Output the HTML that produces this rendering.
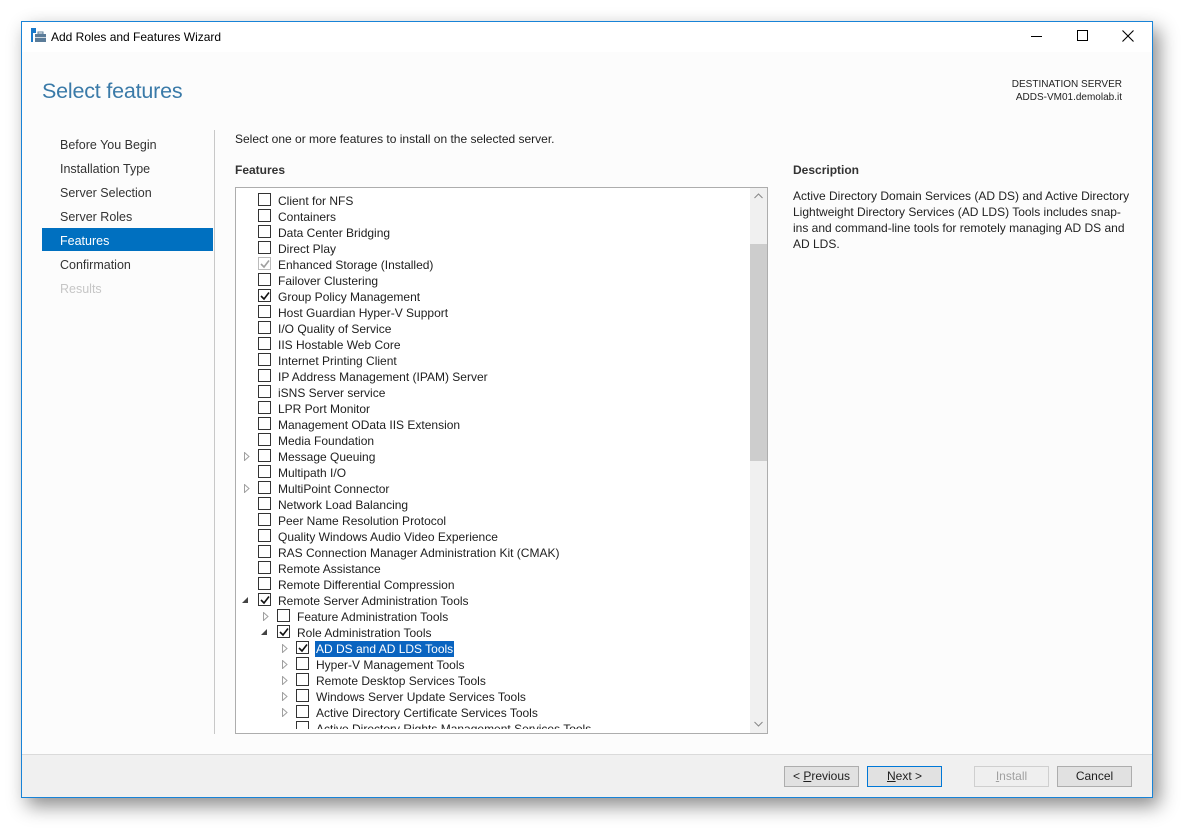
<!DOCTYPE html>
<html><head><meta charset="utf-8"><style>
*{margin:0;padding:0;box-sizing:border-box}
body{width:1195px;height:840px;background:#fff;position:relative;overflow:hidden;font-family:"Liberation Sans",sans-serif;font-size:12px;color:#1e1e1e}
.a{position:absolute;white-space:nowrap}
#win{position:absolute;left:21px;top:21px;width:1132px;height:777px;border:1px solid #1883d7;background:#fcfcfc;box-shadow:6px 8px 18px rgba(0,0,0,.45)}
.nav{position:absolute;left:60px;font-size:12.5px;color:#333}
.row{position:absolute;height:16px;line-height:16px;font-size:12px;color:#1e1e1e}
.cb{position:absolute;width:13px;height:13px;border:1px solid #333;background:#fff;top:1px}
.cb.g{border-color:#bbb}
.btn{position:absolute;top:766px;height:21px;border:1px solid #adadad;background:#e1e1e1;text-align:center;line-height:19px;font-size:12px}
</style></head><body>
<div id="win"></div>
<div class="a" style="left:22px;top:22px;width:1130px;height:30px;background:#fff"></div>
<svg class="a" style="left:31px;top:28px" width="15" height="14"><rect x="0" y="0" width="5" height="5" fill="#1979ca"/><rect x="0" y="5" width="2" height="9" fill="#1979ca"/><rect x="4" y="6" width="11" height="8" fill="#5b7c99"/><rect x="7" y="4" width="5" height="2" fill="none" stroke="#5b7c99"/><rect x="4" y="9" width="11" height="1" fill="#cfd8e0"/></svg>
<div class="a" style="left:51px;top:30px;font-size:12px;color:#000">Add Roles and Features Wizard</div>
<div class="a" style="left:1031px;top:36px;width:11px;height:1px;background:#000"></div>
<div class="a" style="left:1077px;top:30px;width:11px;height:11px;border:1px solid #000"></div>
<svg class="a" style="left:1122px;top:30px" width="12" height="12"><path d="M0.5 0.5L11.5 11.5M11.5 0.5L0.5 11.5" stroke="#000" stroke-width="1.1"/></svg>
<div class="a" style="left:42px;top:79px;font-size:21.5px;color:#3a7aa8;letter-spacing:-0.2px">Select features</div>
<div class="a" style="right:73px;top:78px;font-size:10px;text-align:right;line-height:13px;color:#222">DESTINATION SERVER<br>ADDS-VM01.demolab.it</div>
<div class="a" style="left:214px;top:130px;width:1px;height:604px;background:#c8c8c8"></div>
<div class="nav a" style="top:138px">Before You Begin</div>
<div class="nav a" style="top:162px">Installation Type</div>
<div class="nav a" style="top:186px">Server Selection</div>
<div class="nav a" style="top:210px">Server Roles</div>
<div class="a" style="left:42px;top:228px;width:171px;height:23px;background:#0070c0"></div>
<div class="nav a" style="top:234px;color:#fff">Features</div>
<div class="nav a" style="top:258px">Confirmation</div>
<div class="nav a" style="top:282px;color:#c6c6c6">Results</div>
<div class="a" style="left:235px;top:132px;font-size:12px">Select one or more features to install on the selected server.</div>
<div class="a" style="left:235px;top:163px;font-size:12px;font-weight:bold;color:#333">Features</div>
<div class="a" style="left:793px;top:163px;font-size:12px;font-weight:bold;color:#333">Description</div>
<div class="a" style="left:793px;top:188px;font-size:12px;line-height:16px;color:#222">Active Directory Domain Services (AD DS) and Active Directory<br>Lightweight Directory Services (AD LDS) Tools includes snap-<br>ins and command-line tools for remotely managing AD DS and<br>AD LDS.</div>
<div class="a" style="left:235px;top:187px;width:533px;height:547px;border:1px solid #adadad;background:#fff;overflow:hidden">
<div class="a" style="left:0;top:0;width:514px;height:541px;overflow:hidden"><div id="list"></div></div>
<div class="a" style="left:514px;top:0;width:17px;height:545px;background:#f0f0f0"></div>
<div class="a" style="left:514px;top:56px;width:17px;height:217px;background:#cdcdcd"></div>
<svg class="a" style="left:518px;top:5px" width="9" height="6"><path d="M0.5 5L4.5 1L8.5 5" fill="none" stroke="#888"/></svg>
<svg class="a" style="left:518px;top:533px" width="9" height="6"><path d="M0.5 1L4.5 5L8.5 1" fill="none" stroke="#888"/></svg>
</div>
<div class="a" style="left:22px;top:754px;width:1130px;height:1px;background:#dadada"></div>
<div class="a" style="left:22px;top:755px;width:1130px;height:42px;background:#f0f0f0"></div>
<div class="btn" style="left:784px;width:75px"><span>&lt; <u>P</u>revious</span></div>
<div class="btn" style="left:867px;width:75px;border-color:#0078d7"><u>N</u>ext &gt;</div>
<div class="btn" style="left:974px;width:75px;background:#efefef;border-color:#cfcfcf;color:#a0a0a0"><u>I</u>nstall</div>
<div class="btn" style="left:1057px;width:75px">Cancel</div>
<script>
var R=[["Client for NFS",0,0,0],["Containers",0,0,0],["Data Center Bridging",0,0,0],["Direct Play",0,0,0],["Enhanced Storage (Installed)",0,0,2],["Failover Clustering",0,0,0],["Group Policy Management",0,0,1],["Host Guardian Hyper-V Support",0,0,0],["I/O Quality of Service",0,0,0],["IIS Hostable Web Core",0,0,0],["Internet Printing Client",0,0,0],["IP Address Management (IPAM) Server",0,0,0],["iSNS Server service",0,0,0],["LPR Port Monitor",0,0,0],["Management OData IIS Extension",0,0,0],["Media Foundation",0,0,0],["Message Queuing",0,1,0],["Multipath I/O",0,0,0],["MultiPoint Connector",0,1,0],["Network Load Balancing",0,0,0],["Peer Name Resolution Protocol",0,0,0],["Quality Windows Audio Video Experience",0,0,0],["RAS Connection Manager Administration Kit (CMAK)",0,0,0],["Remote Assistance",0,0,0],["Remote Differential Compression",0,0,0],["Remote Server Administration Tools",0,2,1],["Feature Administration Tools",1,1,0],["Role Administration Tools",1,2,1],["AD DS and AD LDS Tools",2,1,1],["Hyper-V Management Tools",2,1,0],["Remote Desktop Services Tools",2,1,0],["Windows Server Update Services Tools",2,1,0],["Active Directory Certificate Services Tools",2,1,0],["Active Directory Rights Management Services Tools",2,0,0]];
var h="";R.forEach(function(r,i){var t=4+i*16,x=r[1]*19;
h+='<div class="row" style="left:0;top:'+t+'px;width:510px">';
if(r[2]==1)h+='<svg class="a" style="left:'+(8+x)+'px;top:4px" width="6" height="9"><path d="M0.5 0.5L5 4.5L0.5 8.5Z" fill="none" stroke="#a0a0a0"/></svg>';
if(r[2]==2)h+='<svg class="a" style="left:'+(6+x)+'px;top:5px" width="7" height="7"><path d="M6 0L6 6L0 6Z" fill="#444"/></svg>';
h+='<div class="cb'+(r[3]==2?' g':'')+'" style="left:'+(22+x)+'px">';
if(r[3])h+='<svg style="position:absolute;left:1px;top:1px" width="10" height="10"><path d="M1 5L4 8L9 1.5" fill="none" stroke="'+(r[3]==2?'#a0a0a0':'#111')+'" stroke-width="1.6"/></svg>';
h+='</div>';
var sel=i==28;
h+='<span class="a" style="left:'+(42+x)+'px;top:1px;'+(sel?'background:#0a64c0;color:#fff;padding:0 1px;margin-left:-1px;':'')+'">'+r[0]+'</span></div>';});
document.getElementById("list").innerHTML=h;
</script>
</body></html>
